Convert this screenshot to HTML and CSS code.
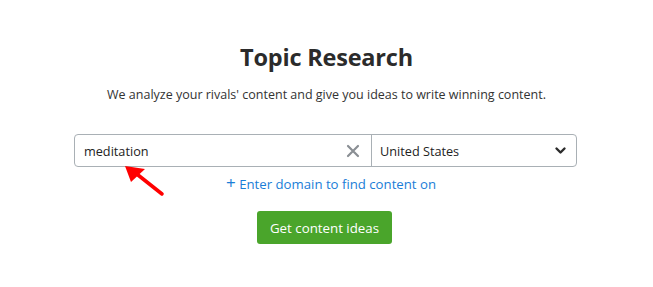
FILE: index.html
```html
<!doctype html>
<html><head>
    <title>Topic Research</title>
    <meta charset="utf-8">
    <link rel="stylesheet" href="styles.css">
</head><body>
    <div class="page">
        <h1>Topic Research</h1>
        <p class="lead">We analyze your rivals' content and give you ideas to write winning content.</p>

        <div class="search">
            <div class="field">
                <span class="query">meditation</span>
                <svg class="clear" width="14" height="14" viewBox="0 0 14 14">
                    <path d="M2 2L12 12M12 2L2 12" stroke="#8a8f94" stroke-width="2.2" stroke-linecap="round"/>
                </svg>
            </div>
            <div class="select">
                <span>United States</span>
                <svg class="chevron" width="13" height="9" viewBox="0 0 13 9">
                    <path d="M2.5 2.5L6.5 6.5L10.5 2.5" fill="none" stroke="#2b2b2b" stroke-width="2.4" stroke-linecap="round" stroke-linejoin="round"/>
                </svg>
            </div>
            <svg class="pointer" width="44" height="34" viewBox="0 0 44 34">
                <path d="M38 28L14 9" stroke="#f00" stroke-width="3.6" stroke-linecap="round"/>
                <polygon points="1,0 21,3 7,16" fill="#f00"/>
            </svg>
        </div>

        <a class="domain" href="#"><span class="plus">+</span> Enter domain to find content on</a>

        <button class="go">Get content ideas</button>
    </div>
</body></html>
```

FILE: styles.css
```css
body {
    margin: 0;
    background: #fff;
    color: #333;
    font-family: 'Open Sans', 'Noto Sans', sans-serif;
}

.page {
    display: flex;
    flex-direction: column;
    align-items: center;
    padding-top: 42px;
}

h1 {
    margin: 0;
    font-size: 23.5px;
    line-height: 30px;
    font-weight: 700;
    color: #2b2b2b;
    letter-spacing: -0.2px;
}

.lead {
    margin: 14px 0 0 0;
    font-size: 12.5px;
    line-height: 18px;
    color: #333;
}

.search {
    position: relative;
    display: flex;
    width: 503px;
    height: 33px;
    margin: 30px 2px 0 0;
    border: 1px solid #a9b0b5;
    border-radius: 4px;
    box-sizing: border-box;
}

.field {
    display: flex;
    align-items: center;
    justify-content: space-between;
    width: 297px;
    padding: 0 11px 0 9px;
    border-right: 1px solid #a9b0b5;
    box-sizing: border-box;
    font-size: 12.7px;
    color: #222;
}

.clear {
    display: block;
}

.select {
    flex: 1;
    display: flex;
    align-items: center;
    justify-content: space-between;
    padding: 0 9px 0 8px;
    font-size: 12.7px;
    color: #222;
}

.pointer {
    position: absolute;
    left: 49px;
    top: 31px;
}

.domain {
    margin: 7px 0 0 9px;
    font-size: 13.2px;
    line-height: 18px;
    color: #1a7dd7;
    text-decoration: none;
}

.plus {
    font-size: 17px;
}

.go {
    margin: 18px 4px 0 0;
    width: 135px;
    height: 33px;
    border: 0;
    border-radius: 3px;
    background: #4aa52b;
    color: #fff;
    font-family: inherit;
    font-size: 13.3px;
}
```
